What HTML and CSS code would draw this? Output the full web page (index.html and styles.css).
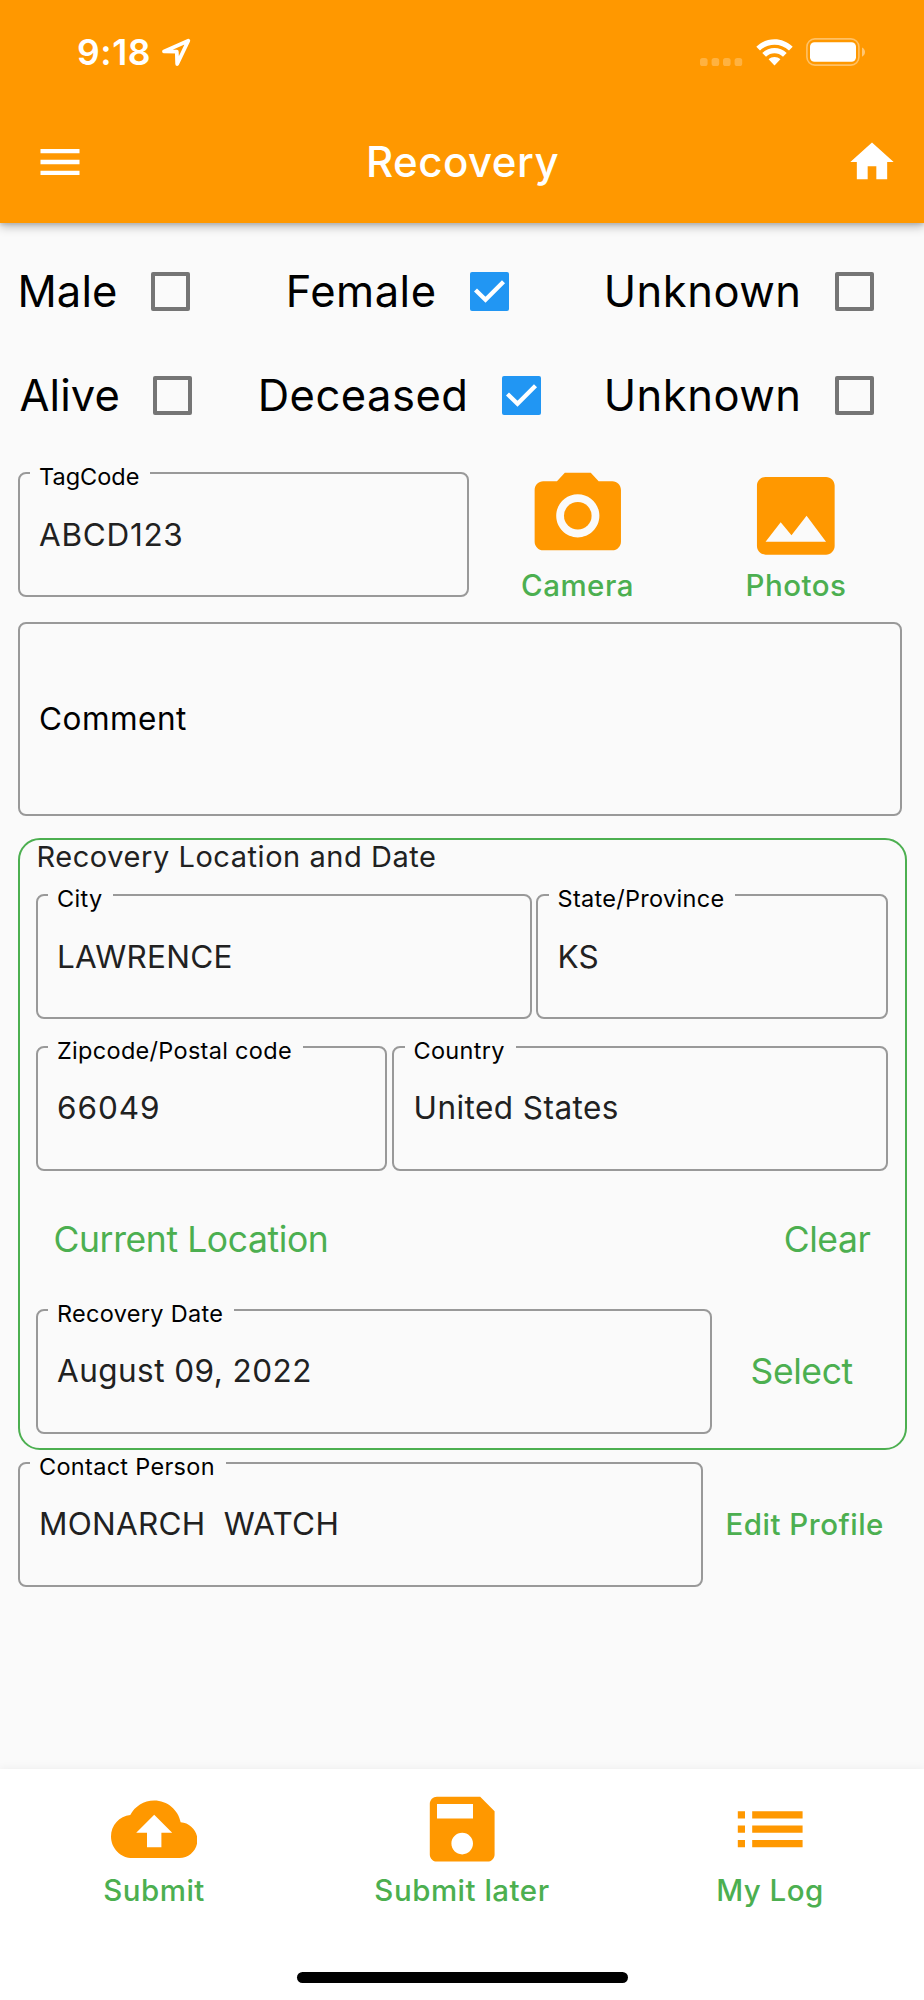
FILE: index.html
```html
<!DOCTYPE html>
<html lang="en">
<head>
<meta charset="utf-8">
<title>Recovery</title>
<link rel="stylesheet" href="styles.css">
</head>
<body>
<div class="screen">
  <header class="header">
    <div class="status">
      <span class="time">9:18</span>
      <svg class="arrow" width="30" height="30" viewBox="0 0 30 30"><path d="M27.3 2.7 3 13.4 15.8 13.7 16.2 26z"/></svg>
      <svg class="dots" width="43" height="8" viewBox="0 0 43 8"><rect width="7.6" height="8" rx="2.6"/><rect x="11.6" width="7.6" height="8" rx="2.6"/><rect x="23" width="7.6" height="8" rx="2.6"/><rect x="34.6" width="7.6" height="8" rx="2.6"/></svg>
      <svg class="wifi" width="37" height="27" viewBox="0 0 37 27"><path d="M.3 7.8C10.5-2.3 26.500-2.300 36.700 7.800L33 11.500C24.800 3.700 12.200 3.700 4 11.500z"/><path d="M6.300 14C13.300 7.300 23.700 7.300 30.700 14L27 17.700C22 13.100 15 13.100 10 17.700z"/><path d="M12.600 20.300C16 17.300 21 17.300 24.400 20.300L18.500 26.500z"/></svg>
      <svg class="battery" width="60" height="28" viewBox="0 0 60 28"><rect x=".9" y=".9" width="52" height="26.200" rx="8" class="shell"/><rect x="4" y="4.300" width="46" height="19.500" rx="4.500"/><path class="nub" d="M56 9.500c4 1.800 4 7.400 0 9.200z"/></svg>
    </div>
    <div class="appbar">
      <svg class="icon" viewBox="0 0 24 24"><path d="M3 18h18v-2H3v2zm0-5h18v-2H3v2zm0-7v2h18V6H3z"/></svg>
      <h1 class="title">Recovery</h1>
      <svg class="icon" viewBox="0 0 24 24"><path d="M10 20v-6h4v6h5v-8h3L12 3 2 12h3v8z"/></svg>
    </div>
  </header>

  <main class="form">
    <div class="checks checks-sex">
      <label class="check short">Male<span class="box"></span></label>
      <label class="check">Female<svg class="tick" viewBox="0 0 39 39"><rect width="39" height="39" rx="2"/><path d="M5.500 18 15.500 27.700 33.500 9.800"/></svg></label>
      <label class="check">Unknown<span class="box"></span></label>
    </div>
    <div class="checks checks-state">
      <label class="check short">Alive<span class="box"></span></label>
      <label class="check">Deceased<svg class="tick" viewBox="0 0 39 39"><rect width="39" height="39" rx="2"/><path d="M5.500 18 15.500 27.700 33.500 9.800"/></svg></label>
      <label class="check">Unknown<span class="box"></span></label>
    </div>

    <div class="tag-row">
      <fieldset class="field"><legend class="tight">TagCode</legend><span class="value code">ABCD123</span></fieldset>
      <div class="media camera">
        <svg viewBox="0 0 24 24"><circle cx="12" cy="12" r="3.200"/><path d="M9 2 7.170 4H4c-1.100 0-2 .9-2 2v12c0 1.100.9 2 2 2h16c1.100 0 2-.9 2-2V6c0-1.100-.9-2-2-2h-3.170L15 2H9zm3 15c-2.760 0-5-2.240-5-5s2.240-5 5-5 5 2.240 5 5-2.240 5-5 5z"/></svg>
        <span class="action">Camera</span>
      </div>
      <div class="media photos">
        <svg viewBox="0 0 24 24"><path d="M21 19V5c0-1.100-.9-2-2-2H5c-1.100 0-2 .9-2 2v14c0 1.100.9 2 2 2h14c1.100 0 2-.9 2-2zM8.500 13.500l2.500 3.010L14.500 12l4.500 6H5l3.500-4.500z"/></svg>
        <span class="action">Photos</span>
      </div>
    </div>

    <div class="comment">Comment</div>

    <section class="card">
      <h2 class="card-title">Recovery Location and Date</h2>
      <div class="row row-city">
        <fieldset class="field"><legend>City</legend><span class="value name">LAWRENCE</span></fieldset>
        <fieldset class="field"><legend>State/Province</legend><span class="value name">KS</span></fieldset>
      </div>
      <div class="row row-zip">
        <fieldset class="field"><legend>Zipcode/Postal code</legend><span class="value digits">66049</span></fieldset>
        <fieldset class="field"><legend>Country</legend><span class="value">United States</span></fieldset>
      </div>
      <div class="links"><span class="link">Current Location</span><span class="link">Clear</span></div>
      <div class="row row-date">
        <fieldset class="field"><legend>Recovery Date</legend><span class="value">August 09, 2022</span></fieldset>
        <span class="link">Select</span>
      </div>
    </section>

    <div class="row row-contact">
      <fieldset class="field"><legend>Contact Person</legend><span class="value name">MONARCH  WATCH</span></fieldset>
      <span class="action">Edit Profile</span>
    </div>
  </main>

  <nav class="nav">
    <div class="tabs">
      <div class="tab"><svg viewBox="0 0 24 24"><path d="M19.350 10.040C18.670 6.590 15.640 4 12 4 9.110 4 6.600 5.640 5.350 8.040 2.340 8.360 0 10.910 0 14c0 3.310 2.690 6 6 6h13c2.760 0 5-2.240 5-5 0-2.640-2.050-4.780-4.650-4.960zM14 13v4h-4v-4H7l5-5 5 5h-3z"/></svg><span class="action">Submit</span></div>
      <div class="tab"><svg viewBox="0 0 24 24"><path d="M17 3H5c-1.110 0-2 .9-2 2v14c0 1.100.89 2 2 2h14c1.100 0 2-.9 2-2V7l-4-4zm-5 16c-1.660 0-3-1.340-3-3s1.340-3 3-3 3 1.340 3 3-1.340 3-3 3zm3-10H5V5h10v4z"/></svg><span class="action">Submit later</span></div>
      <div class="tab"><svg viewBox="0 0 24 24"><path d="M3 13h2v-2H3v2zm0 4h2v-2H3v2zm0-8h2V7H3v2zm4 4h14v-2H7v2zm0 4h14v-2H7v2zM7 7v2h14V7H7z"/></svg><span class="action">My Log</span></div>
    </div>
    <div class="home-bar"></div>
  </nav>
</div>
</body>
</html>
```

FILE: styles.css
```css
* { box-sizing: border-box; }
body { margin: 0; background: #fafafa; font-family: Inter, "Liberation Sans", sans-serif; }
svg { display: block; flex: none; }
.screen { width: 924px; height: 2000px; display: flex; flex-direction: column; overflow: hidden; }

.header { height: 222.500px; flex: none; background: #ff9800; color: #fff; box-shadow: 0 4px 9px rgba(0,0,0,.25), 0 2px 3px rgba(0,0,0,.1); }
.header svg { fill: #fff; }
.status { height: 101px; display: flex; padding: 38px 0 0 77px; }
.time { width: 84px; font-size: 35.500px; font-weight: 600; line-height: 30px; letter-spacing: .6px; white-space: nowrap; }
.header .arrow { fill: none; stroke: #fff; stroke-width: 3.800; stroke-linejoin: round; }
.dots { margin: 20px 13px 0 508.500px; opacity: .25; }
.wifi { margin: 1px 13px 0 0; }
.header .shell { fill: none; stroke: #fff; stroke-width: 1.600; opacity: .4; }
.nub { opacity: .45; }
.appbar { height: 121.500px; display: grid; grid-template-columns: 52px 1fr 52px; align-items: center; padding: 0 26px 0 34px; }
.icon { width: 52px; height: 52px; }
.title { margin: 0 7px 0 0; text-align: center; font-size: 42px; font-weight: 500; line-height: 52px; letter-spacing: .5px; }

.form { flex: 1; padding: 16.500px 17px 0 17.500px; }
.checks { height: 104px; display: grid; align-items: center; font-size: 43.500px; color: #000; }
.checks-sex { grid-template-columns: 172px 319px 365px; }
.checks-state { grid-template-columns: 174.500px 348.500px 333px; }
.check { display: flex; justify-content: flex-end; align-items: center; gap: 33px; letter-spacing: .5px; }
.check.short { letter-spacing: .1px; }
.box, .tick { width: 39px; height: 39px; flex: none; }
.box { border: 4px solid #757575; border-radius: 2px; }
.tick { fill: #2196f3; }
.tick path { fill: none; stroke: #fff; stroke-width: 4.300; }

.field { min-width: 0; height: 137px; margin: 0; padding: 0 0 12px 19.500px; border: 2px solid #999; border-radius: 8px; display: flex; align-items: center; }
.field legend { height: 26px; margin-left: -9px; padding: 7px 11px 0 9px; font-size: 23.500px; line-height: 20px; letter-spacing: .3px; color: #000; white-space: nowrap; }
.field .tight { letter-spacing: 0; }
.value { font-size: 31.500px; line-height: 38px; letter-spacing: .45px; color: #212121; white-space: pre; }
.value.code { letter-spacing: .7px; }
.value.name { letter-spacing: .25px; }
.value.digits { letter-spacing: .95px; }

.tag-row { height: 160px; margin-top: 13px; display: grid; grid-template-columns: 451px 218px 219px; align-items: start; }
.media { display: flex; flex-direction: column; align-items: center; padding-top: 3.500px; }
.media svg { width: 103.600px; height: 103.600px; fill: #ff9800; }
.action { font-size: 29.500px; font-weight: 500; line-height: 36px; letter-spacing: .5px; color: #4caf50; white-space: nowrap; }
.comment { width: 884px; height: 194px; margin-top: 2px; padding: 0 0 2px 19.500px; border: 2px solid #999; border-radius: 8px; display: flex; align-items: center; font-size: 31.500px; letter-spacing: .5px; color: #000; }

.card { width: 889px; height: 611.500px; margin-top: 22px; border: 2px solid #4caf50; border-radius: 22px; padding: 0 17px 0 16px; }
.card-title { margin: 0; height: 42px; padding: 0 0 0 1px; font-size: 29px; font-weight: 400; line-height: 34px; letter-spacing: .55px; color: #212121; }
.row { display: grid; align-items: start; }
.row-city { grid-template-columns: 496px 352px; gap: 4.500px; height: 151.500px; }
.row-zip { grid-template-columns: 351.500px 496px; gap: 5px; height: 138px; }
.links { height: 125px; padding: 12px 17px 0 18px; display: flex; justify-content: space-between; align-items: center; }
.link { font-size: 35.500px; line-height: 44px; letter-spacing: -.4px; color: #4caf50; white-space: nowrap; }
.row-date { grid-template-columns: 676px 1fr; }
.row-date .link { padding: 53px 0 0 39px; }
.row-contact { grid-template-columns: 685.500px 1fr; }
.row-contact .action { padding: 56px 0 0 22.500px; }

.nav { height: 231px; flex: none; background: #fff; box-shadow: 0 -1px 8px rgba(0,0,0,.05); display: flex; flex-direction: column; align-items: center; }
.tabs { width: 924px; height: 203px; display: grid; grid-template-columns: repeat(3, 308px); padding-top: 17px; }
.tab { display: flex; flex-direction: column; align-items: center; }
.tab svg { width: 86.400px; height: 86.400px; fill: #ff9800; }
.home-bar { width: 331px; height: 11px; border-radius: 6px; background: #000; }
```
